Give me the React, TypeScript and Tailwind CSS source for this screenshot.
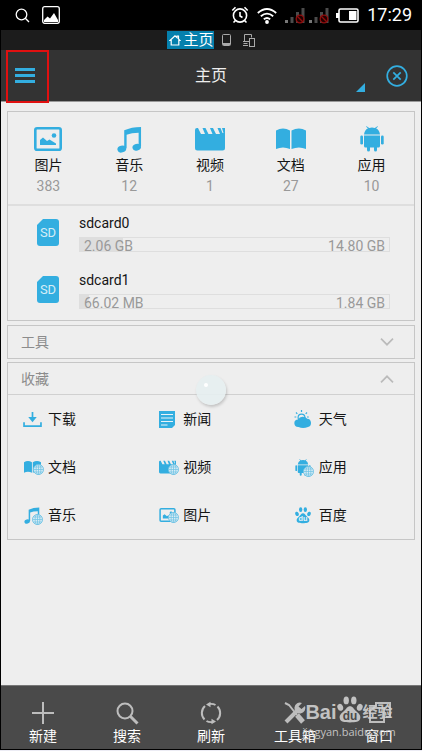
import React from 'react';

type IconProps = { className?: string };

function PictureIcon({ className }: IconProps) {
  return (
    <svg viewBox="0 0 28 24" className={className} aria-hidden="true">
      <rect x="1.3" y="1.3" width="25.4" height="21.4" rx="1.8" fill="none" stroke="currentColor" strokeWidth="2.6" />
      <path d="M6 18v-5l3-2.500 4 3.500 2.500-1.500 6.500 4V18z" fill="currentColor" />
      <circle cx="20" cy="8.500" r="2.300" fill="currentColor" />
    </svg>
  );
}

function MusicIcon({ className }: IconProps) {
  return (
    <svg viewBox="0 0 26 28" className={className} aria-hidden="true">
      <path d="M7.500 4.500Q15 1 25 1v20h-2.500V7Q15 7 10 9v14H7.500z" fill="currentColor" />
      <ellipse cx="5" cy="24" rx="4.600" ry="3.500" transform="rotate(-15 5 24)" fill="currentColor" />
      <ellipse cx="20.500" cy="22" rx="4.500" ry="3.500" transform="rotate(-15 20.500 22)" fill="currentColor" />
    </svg>
  );
}

function VideoIcon({ className }: IconProps) {
  return (
    <svg viewBox="0 0 30 24" className={className} aria-hidden="true">
      <path
        d="M2 1h1l3 6h4L7.500 1h3l3 6h4L15 1h3l3 6h4l-2.500-6h3l2 5h1L27 1h3v20a2.500 2.500 0 0 1-2.500 2.500h-25A2.500 2.500 0 0 1 0 21V3a2 2 0 0 1 2-2z"
        fill="currentColor"
      />
    </svg>
  );
}

function BookIcon({ className }: IconProps) {
  return (
    <svg viewBox="0 0 30 22" className={className} aria-hidden="true">
      <path d="M0 2.500Q7-1.500 14 2.500V21Q7 18 0 21z" fill="currentColor" />
      <path d="M15.500 2.500Q23-1.500 30 2.500V21Q23 18 15.500 21z" fill="currentColor" />
    </svg>
  );
}

function AndroidIcon({ className }: IconProps) {
  return (
    <svg viewBox="0 0 24 26" className={className} aria-hidden="true" fill="currentColor">
      <path d="M4 8.500Q4.500 4 8 2.300L6 .8l.6-.6L9.200 2Q12 1 14.800 2L17.400.2l.6.6-2 1.500Q19.500 4 20 8.500z" />
      <path d="M4 9.500h16V20a1.500 1.500 0 0 1-1.500 1.500H17V24a1.500 1.500 0 0 1-3 0v-2.500h-4V24a1.500 1.500 0 0 1-3 0v-2.500H5.500A1.500 1.500 0 0 1 4 20z" />
      <rect x="0.300" y="9.500" width="2.700" height="9" rx="1.300" />
      <rect x="21" y="9.500" width="2.700" height="9" rx="1.300" />
    </svg>
  );
}

function SdIcon() {
  return (
    <svg viewBox="0 0 22 27" className="h-[27px] w-[22px]" aria-hidden="true">
      <path d="M6 0h13a3 3 0 0 1 3 3v21a3 3 0 0 1-3 3H3a3 3 0 0 1-3-3V6z" fill="#33aee0" />
      <text x="11" y="18" textAnchor="middle" fontSize="13" fill="#d5edf7" fontFamily="Roboto, sans-serif">SD</text>
    </svg>
  );
}

function DownloadIcon({ className }: IconProps) {
  return (
    <svg viewBox="0 0 20 17" className={className} aria-hidden="true">
      <path d="M10 1v8M1 12v4h18v-4" fill="none" stroke="currentColor" strokeWidth="1.800" />
      <path d="M5.500 6.500h9L10 12z" fill="currentColor" />
    </svg>
  );
}

function NewsIcon({ className }: IconProps) {
  return (
    <svg viewBox="0 0 16 17" className={className} aria-hidden="true">
      <path d="M0 0h16v14l-3 3H0z" fill="currentColor" />
      <path d="M2 3.500h12M2 7h12M2 10.500h12M2 14h6.500" stroke="#e8f3f8" strokeWidth="1.200" />
    </svg>
  );
}

function WeatherIcon({ className }: IconProps) {
  return (
    <svg viewBox="0 0 18 18" className={className} aria-hidden="true">
      <path d="M7.500 0v2M2 2.500l1.300 1.300M13 2.500l-1.300 1.300M.5 7h1.800M13 7h1.800" stroke="currentColor" strokeWidth="1.200" />
      <circle cx="7.500" cy="7.500" r="3.400" fill="none" stroke="currentColor" strokeWidth="1.200" />
      <path d="M4.500 17a4 3.800 0 0 1-.3-7.600 5 4 0 0 1 9-.6A4.200 4.200 0 0 1 14 17Q9 18.800 4.500 17z" fill="currentColor" />
    </svg>
  );
}

function PawIcon({ className, ink }: IconProps & { ink: string }) {
  return (
    <svg viewBox="0 0 24 25" className={className} aria-hidden="true" fill="currentColor">
      <ellipse cx="3" cy="10" rx="2.600" ry="3.300" transform="rotate(-20 3 10)" />
      <ellipse cx="8.500" cy="3.700" rx="2.500" ry="3.600" />
      <ellipse cx="15.500" cy="3.700" rx="2.500" ry="3.600" />
      <ellipse cx="21" cy="10" rx="2.600" ry="3.300" transform="rotate(20 21 10)" />
      <path d="M12 9c2.500 0 3.500 2.500 5.500 4.500s4.500 3.500 4 6.500c-.6 4-4.500 4-9.500 4s-8.900 0-9.500-4c-.5-3 2-4.500 4-6.500S9.500 9 12 9z" />
      <text x="12" y="21.500" textAnchor="middle" fontSize="11" fontWeight="700" fill={ink} fontFamily="Liberation Sans, sans-serif">du</text>
    </svg>
  );
}

function GlobeBadge() {
  return (
    <svg viewBox="0 0 12 12" className="absolute -bottom-px -right-[3px] size-[11px]" aria-hidden="true">
      <circle cx="6" cy="6" r="5.500" fill="#d7ecf5" stroke="#6fc2e4" />
      <path d="M.5 6h11M1.500 3.300h9M1.500 8.700h9M6 .5v11" stroke="#6fc2e4" strokeWidth=".8" />
      <ellipse cx="6" cy="6" rx="2.600" ry="5.500" fill="none" stroke="#6fc2e4" strokeWidth=".8" />
    </svg>
  );
}

function SignalIcon() {
  return (
    <svg viewBox="0 0 20 17" className="h-[17px] w-5" aria-hidden="true">
      <path d="M0 13h3v3H0z" fill="#777" />
      <path d="M5.500 10h3v6h-3zM11 5h3v11h-3zM16.500 1h3v15h-3z" fill="#4b4b4b" />
      <circle cx="15" cy="12" r="3.800" fill="#200" stroke="#900d0d" strokeWidth="1.300" />
      <path d="M12.300 9.300l5.400 5.400" stroke="#900d0d" strokeWidth="1.300" />
    </svg>
  );
}

function StatusBar() {
  return (
    <div className="flex h-[30px] items-center bg-black pl-[14px] pr-[9px] text-white">
      <svg viewBox="0 0 15 15" className="size-[15px]" aria-hidden="true" fill="none" stroke="currentColor" strokeWidth="1.300">
        <circle cx="6.500" cy="6.500" r="5.300" />
        <path d="M10.300 10.300l3.700 3.700" />
      </svg>
      <svg viewBox="0 0 18 18" className="ml-3 size-[18px]" aria-hidden="true">
        <rect x=".7" y=".7" width="16.600" height="16.600" rx="2" fill="none" stroke="currentColor" strokeWidth="1.300" />
        <path d="M2 16v-2l3.500-3.500L8 12.500 12 7l4 7v2z" fill="currentColor" />
      </svg>
      <div className="ml-auto flex items-center">
        <svg viewBox="0 0 18 18" className="size-[18px]" aria-hidden="true" fill="none" stroke="currentColor" strokeWidth="1.600">
          <circle cx="9" cy="9.500" r="6.600" />
          <path d="M9 6v4l2.500 1.500M1.300 4.500l3.200-3.200M16.700 4.500l-3.200-3.200M4.500 14.500l-2 2M13.500 14.500l2 2" />
        </svg>
        <svg viewBox="0 0 20 17" className="ml-2 h-[17px] w-5" aria-hidden="true" fill="none" stroke="currentColor" strokeWidth="1.800">
          <path d="M.8 6Q10-2 19.200 6M3.800 9.300q6.200-5.300 12.400 0M6.800 12.300q3.200-2.600 6.400 0" />
          <circle cx="10" cy="15" r="1" fill="currentColor" />
        </svg>
        <div className="ml-2 flex gap-1">
          <SignalIcon />
          <SignalIcon />
        </div>
        <svg viewBox="0 0 23 15" className="ml-[7px] h-[15px] w-[23px]" aria-hidden="true">
          <rect x="3" y="1" width="19" height="13" rx="1.500" fill="none" stroke="#fff" strokeWidth="1.600" />
          <path d="M0 5h3v5H0zM13 3h7.500v9H13z" fill="#fff" />
        </svg>
        <span className="ml-2 text-lg leading-[30px]">17:29</span>
      </div>
    </div>
  );
}

function WindowTabs() {
  return (
    <div className="flex h-5 items-center justify-center bg-[#1c1c1c] text-[#aaa]">
      <button className="flex h-[18px] items-center gap-[2px] bg-[#0580ad] pl-[2px] text-white">
        <svg viewBox="0 0 12 12" className="size-3" aria-hidden="true" fill="none" stroke="currentColor" strokeWidth="1.200">
          <path d="M1 6.500L6 1.800l2 1.800V2h1.500v3L11 6.500H9.800V11H2.200V6.500z" />
        </svg>
        <span className="text-[15px] leading-[18px]">主页</span>
      </button>
      <button aria-label="手机" className="ml-2">
        <svg viewBox="0 0 9 12" className="h-3 w-[9px]" aria-hidden="true">
          <rect x=".5" y=".5" width="8" height="11" rx="1" fill="none" stroke="currentColor" />
          <path d="M1 10h7" stroke="currentColor" strokeWidth="2" />
        </svg>
      </button>
      <button aria-label="网络" className="ml-3">
        <svg viewBox="0 0 12 13" className="h-[13px] w-3" aria-hidden="true" fill="none" stroke="currentColor">
          <path d="M1.500 7.500v-7h7v3M0 7.500h6M.5 9.500h4M0 11.500h5" />
          <rect x="6.500" y="4.500" width="5" height="8" />
        </svg>
      </button>
    </div>
  );
}

function TitleBar() {
  return (
    <header className="relative grid h-[51px] grid-cols-3 items-center bg-[#333] text-[#33aee0]">
      <button aria-label="菜单" className="ml-[14px] flex w-5 flex-col gap-[3px]">
        <span className="h-[3px] bg-current" />
        <span className="h-[3px] bg-current" />
        <span className="h-[3px] bg-current" />
      </button>
      <h1 className="text-center text-base leading-6 text-[#eee]">主页</h1>
      <div className="flex items-center justify-end gap-[21px] pr-[13px]">
        <svg viewBox="0 0 9 9" className="mt-6 size-[9px]" aria-hidden="true">
          <path d="M9 0v9H0z" fill="currentColor" />
        </svg>
        <button aria-label="关闭">
          <svg viewBox="0 0 22 22" className="size-[22px]" aria-hidden="true" fill="none" stroke="currentColor" strokeWidth="1.700">
            <circle cx="11" cy="11" r="9.800" />
            <path d="M7.300 7.300l7.400 7.400M14.700 7.300l-7.400 7.400" />
          </svg>
        </button>
      </div>
      <div className="pointer-events-none absolute left-[5px] top-0 h-[53px] w-[43px] border-2 border-[#e11010]" />
    </header>
  );
}

const categories = [
  { name: '图片', count: 383, icon: <PictureIcon className="h-6 w-7" /> },
  { name: '音乐', count: 12, icon: <MusicIcon className="h-[27px] w-[25px]" /> },
  { name: '视频', count: 1, icon: <VideoIcon className="h-6 w-[30px]" /> },
  { name: '文档', count: 27, icon: <BookIcon className="h-[22px] w-[30px]" /> },
  { name: '应用', count: 10, icon: <AndroidIcon className="h-[26px] w-6" /> },
];

const storages = [
  { name: 'sdcard0', used: '2.06 GB', total: '14.80 GB', percent: 14 },
  { name: 'sdcard1', used: '66.02 MB', total: '1.84 GB', percent: 3 },
];

const favorites = [
  { name: '下载', icon: <DownloadIcon className="h-4 w-[19px]" />, remote: false },
  { name: '新闻', icon: <NewsIcon className="h-[17px] w-4" />, remote: false },
  { name: '天气', icon: <WeatherIcon className="size-[18px]" />, remote: false },
  { name: '文档', icon: <BookIcon className="h-[14px] w-[17px]" />, remote: true },
  { name: '视频', icon: <VideoIcon className="h-[14px] w-[17px]" />, remote: true },
  { name: '应用', icon: <AndroidIcon className="h-[17px] w-4" />, remote: true },
  { name: '音乐', icon: <MusicIcon className="h-[17px] w-4" />, remote: true },
  { name: '图片', icon: <PictureIcon className="h-[14px] w-[17px]" />, remote: true },
  { name: '百度', icon: <PawIcon className="h-[17px] w-4" ink="#e8f3f8" />, remote: false },
];

function Chevron({ up = false }: { up?: boolean }) {
  return (
    <svg viewBox="0 0 14 8" className="h-2 w-[14px] text-[#bbb]" aria-hidden="true" fill="none" stroke="currentColor" strokeWidth="1.700">
      <path d={up ? 'M1 7.300L7 1.300l6 6' : 'M1 .7l6 6 6-6'} />
    </svg>
  );
}

function Overview() {
  return (
    <section className="border border-[#c6c6c6]">
      <div className="grid h-[94px] grid-cols-5 border-b-2 border-[#dedede] pr-[2px]">
        {categories.map((c) => (
          <button key={c.name} className="flex flex-col items-center pt-3">
            <span className="flex h-[30px] items-center text-[#33aee0]">{c.icon}</span>
            <span className="text-sm leading-[22px]">{c.name}</span>
            <span className="text-sm leading-5 text-[#999]">{c.count}</span>
          </button>
        ))}
      </div>
      <ul className="flex flex-col gap-[18px] pb-[11px] pl-[29px] pr-6 pt-[7px]">
        {storages.map((s) => (
          <li key={s.name} className="flex items-center gap-5">
            <SdIcon />
            <div className="flex-1">
              <p className="text-sm leading-5">{s.name}</p>
              <div className="relative mt-1 flex h-[15px] justify-between border border-[#dedede] px-1 text-sm leading-4 text-[#999]">
                <div className="absolute inset-y-0 left-0 bg-[#dedede]" style={{ width: `${s.percent}%` }} />
                <span className="relative">{s.used}</span>
                <span className="relative">{s.total}</span>
              </div>
            </div>
          </li>
        ))}
      </ul>
    </section>
  );
}

function Watermark() {
  return (
    <div className="pointer-events-none absolute right-[27px] top-[10px] flex w-[90px] flex-col items-center text-[#d0d0d0] opacity-90">
      <div className="flex h-7 items-end">
        <span className="font-['Liberation_Sans',sans-serif] text-xl font-bold leading-6">Bai</span>
        <PawIcon className="h-7 w-[26px] shrink-0" ink="#4a4a4a" />
        <span className="whitespace-nowrap text-[15px] font-bold leading-6">经验</span>
      </div>
      <span className="font-['Open_Sans',sans-serif] text-[11px] leading-4">jingyan.baidu.com</span>
    </div>
  );
}

const actions = [
  { name: '新建', icon: <path d="M11 0v22M0 11h22" /> },
  {
    name: '搜索',
    icon: (
      <>
        <circle cx="9" cy="9" r="7.500" />
        <path d="M14.500 14.500l7 7" strokeWidth="3" />
      </>
    ),
  },
  {
    name: '刷新',
    icon: (
      <>
        <path d="M4.500 17.500A9.300 9.300 0 0 1 5 4M17.500 4.500A9.300 9.300 0 0 1 17 18M9 2q4-.5 6.500 1M13 20q-4 .5-6.500-1" />
        <path d="M6 2.500L10.500-.2v5.400zM16 19.500L11.500 16.800v5.400z" fill="currentColor" stroke="none" />
      </>
    ),
  },
  {
    name: '工具箱',
    icon: (
      <>
        <path d="M1 1l4 2 4 5M9 8l4 5" strokeWidth="2" />
        <path d="M13 13l6 7" strokeWidth="5" />
        <path d="M2 20L14 8" strokeWidth="4" />
        <path d="M21 4l-3.500 3-3-2.500L18 1a5.500 5.500 0 1 0 3 3z" fill="currentColor" stroke="none" />
      </>
    ),
  },
  {
    name: '窗口',
    icon: (
      <>
        <path d="M8 5V1h14v14h-4" />
        <rect x="2" y="6" width="14" height="14" />
      </>
    ),
  },
];

function ActionBar() {
  return (
    <nav className="relative grid h-[64px] grid-cols-5 border-t border-[#777] bg-[#4a4a4a] text-white">
      {actions.map((a) => (
        <button key={a.name} className="flex flex-col items-center pt-4">
          <svg viewBox="0 0 22 22" className="size-[22px] overflow-visible text-[#bdbdbd]" aria-hidden="true" fill="none" stroke="currentColor" strokeWidth="2">
            {a.icon}
          </svg>
          <span className="mt-[2px] text-sm leading-5">{a.name}</span>
        </button>
      ))}
      <Watermark />
    </nav>
  );
}

export default function App() {
  return (
    <div className="flex min-h-screen flex-col border-b border-[#ececf4] bg-black px-px pb-px font-[Roboto,'Noto_Sans_CJK_SC',sans-serif] text-[#151515]">
      <StatusBar />
      <WindowTabs />
      <TitleBar />
      <main className="flex flex-1 flex-col border-t border-[#999] bg-[#eee] px-[6px] pt-[9px]">
        <Overview />
        <section className="mt-1 border border-[#c6c6c6]">
          <button className="flex h-8 w-full items-center justify-between pl-[13px] pr-5 text-sm text-[#8c8c8c]">
            工具
            <Chevron />
          </button>
        </section>
        <section className="relative mt-[3px] border border-[#c6c6c6]">
          <button className="flex h-8 w-full items-center justify-between border-b border-[#d0d0d0] pl-[13px] pr-5 text-sm text-[#8c8c8c]">
            收藏
            <Chevron up />
          </button>
          <div className="grid grid-cols-3">
            {favorites.map((f, i) => (
              <a key={i} href="#" className="flex h-12 items-center gap-[6px] pl-[14px]">
                <span className="flex w-5 justify-center text-[#33aee0]">
                  <span className="relative">
                    {f.icon}
                    {f.remote && <GlobeBadge />}
                  </span>
                </span>
                <span className="text-sm leading-5">{f.name}</span>
              </a>
            ))}
          </div>
          <div className="absolute left-1/2 top-3 size-[30px] -translate-x-1/2 rounded-full bg-[#e6eeef]/90 shadow-[1px_2px_3px_rgba(0,0,0,0.18)]">
            <div className="ml-2 mt-2 size-1 rounded-full bg-white" />
          </div>
        </section>
      </main>
      <ActionBar />
    </div>
  );
}
